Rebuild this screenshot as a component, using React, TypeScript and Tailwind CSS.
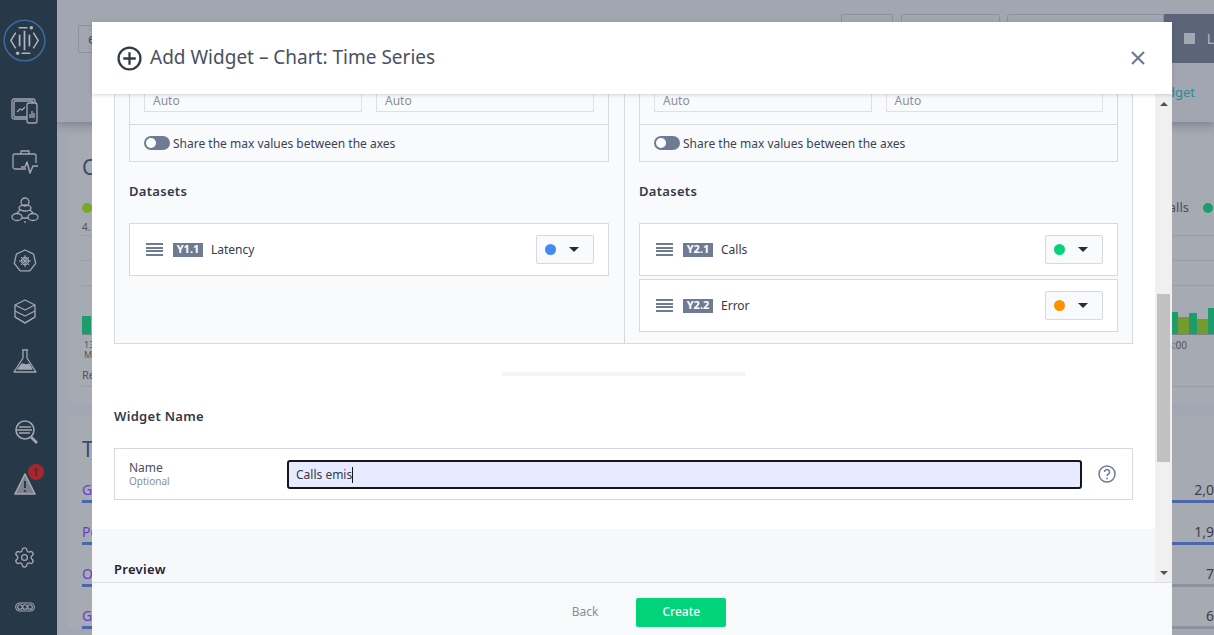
import { Settings } from "lucide-react";
import type { ReactNode } from "react";

function Logo() {
	return (
		<svg viewBox="0 0 44 44" className="h-[43px] w-[43px]" fill="none" stroke="#b0b4be" strokeWidth="1.5">
			<circle cx="22" cy="22" r="20.800" stroke="#3f6b9c" strokeWidth="1.500" />
			<path d="M13 14l-5 8 5 8M31 14l5 8-5 8M16 9h9M19 35h9" />
			<path d="M17 16v12M22 12v20M27 16v12" strokeWidth="1.800" />
			<circle cx="29" cy="9" r="1.800" fill="#b0b4be" stroke="none" />
			<circle cx="15" cy="35" r="1.800" fill="#b0b4be" stroke="none" />
		</svg>
	);
}

function NavIcon({ children }: { children: ReactNode }) {
	return (
		<svg viewBox="0 0 28 28" className="h-7 w-7" fill="none" stroke="#a3a7b1" strokeWidth="1.300" strokeLinejoin="round">
			{children}
		</svg>
	);
}

function NavCell({ children }: { children: ReactNode }) {
	return <div className="flex h-[50px] items-center justify-center">{children}</div>;
}

function Sidebar() {
	return (
		<aside className="flex h-[635px] w-[57px] shrink-0 flex-col items-center bg-[#273849] pr-2">
			<div className="mb-[25px] mt-[19px] h-[42px]">
				<Logo />
			</div>
			<NavCell>
				<NavIcon>
					<rect x="1" y="2" width="23" height="20" rx="2" />
					<rect x="3" y="4" width="19" height="16" rx="1" />
					<rect x="16" y="6" width="10" height="20" rx="2" fill="#273849" />
					<path d="M6 15l3-3 2 1 3-3M19 21v-4M21 21v-7M23 21v-5" />
				</NavIcon>
			</NavCell>
			<NavCell>
				<NavIcon>
					<g transform="translate(0 2)">
						<path d="M10 5V2h8v3" />
						<path d="M15 20H4a2 2 0 0 1-2-2V7a2 2 0 0 1 2-2h19a2 2 0 0 1 2 2v7" />
						<path d="M10 18h4l2-5 3 11 3-7h5" strokeWidth="1.500" />
					</g>
				</NavIcon>
			</NavCell>
			<NavCell>
				<NavIcon>
					<circle cx="14" cy="5" r="4" />
					<ellipse cx="14" cy="11" rx="6" ry="3" />
					<ellipse cx="6" cy="20" rx="5" ry="3.500" />
					<ellipse cx="22" cy="20" rx="5" ry="3.500" />
					<path d="M9 13l-3 3M19 13l3 3M11 21h6M14 24v2" />
				</NavIcon>
			</NavCell>
			<NavCell>
				<NavIcon>
					<path d="M14 3l8.600 4.100 2.100 9.300-5.900 7.500H9.200l-5.900-7.500 2.100-9.300z" />
					<circle cx="14" cy="14" r="3.500" />
					<path d="M14 8v12M8 14h12M10 10l8 8M18 10l-8 8" strokeWidth="1" />
				</NavIcon>
			</NavCell>
			<NavCell>
				<NavIcon>
					<path d="M14 3l10 5v12l-10 6-10-6V8z" />
					<path d="M4 8l10 5 10-5M4 14l10 5 10-5M4 20l10 6 10-6" />
				</NavIcon>
			</NavCell>
			<NavCell>
				<NavIcon>
					<path d="M11 3h6M12 3v8L3 25h22l-9-14V3" />
					<path d="M7 22l4-5 4 1 3-1 3 5z" fill="#a3a7b1" />
				</NavIcon>
			</NavCell>
			<div className="mt-[21px]">
				<NavCell>
					<NavIcon>
						<circle cx="14" cy="12" r="9" strokeWidth="1.600" />
						<path d="M20 19l6 6" strokeWidth="2.600" />
						<path d="M8 9h12M6 12h15M8 15h11" />
					</NavIcon>
				</NavCell>
			</div>
			<div className="mt-[2px]">
				<NavCell>
					<div className="relative">
						<NavIcon>
							<path d="M14 4L4 24h20z" fill="#7c818d" strokeWidth="1.600" />
							<path d="M14 11v7" stroke="#273849" strokeWidth="2" />
							<circle cx="14" cy="21" r="1.100" fill="#273849" stroke="none" />
						</NavIcon>
						<div className="absolute -top-[6px] left-[17px] flex h-4 w-4 items-center justify-center rounded-full bg-[#a6262d] text-[10px] font-semibold text-[#5e2227]">
							1
						</div>
					</div>
				</NavCell>
			</div>
			<div className="mt-[23px]">
				<NavCell>
					<Settings className="h-[23px] w-[23px] text-[#a3a7b1]" strokeWidth={1.4} />
				</NavCell>
			</div>
			<NavCell>
				<svg viewBox="0 0 20 10" className="h-[10px] w-5" fill="none" stroke="#a3a7b1" strokeWidth="1.100">
					<rect x="0.700" y="1" width="18.600" height="8" rx="4" />
					<circle cx="5" cy="5" r="2.300" fill="#273849" />
					<circle cx="10" cy="5" r="2.300" fill="#273849" />
					<circle cx="15" cy="5" r="2.300" fill="#273849" />
				</svg>
			</NavCell>
		</aside>
	);
}

const rows = [
	{ name: "G", value: "2,0", fill: 100 },
	{ name: "Po", value: "1,9", fill: 100 },
	{ name: "O", value: "7", fill: 30 },
	{ name: "G", value: "6", fill: 28 },
];

function Backdrop() {
	return (
		<div className="flex min-w-0 flex-1 flex-col bg-[#a3a7b1]">
			<div className="relative flex h-[122px] shrink-0 flex-col bg-[#a2a6b0] shadow-[0_3px_8px_rgba(60,60,70,0.35)]">
				<div className="flex items-start pl-[21px] pt-[14px]">
					<div className="mt-[11px] flex h-[28px] w-[300px] items-center rounded-[2px] border border-[#8d919b] px-[9px] text-sm text-[#4a4f5a]">
						e
					</div>
					<div className="ml-[464px] h-[34px] w-[52px] rounded-[2px] border border-[#8d919b]" />
					<div className="ml-2 h-[34px] w-[99px] rounded-[2px] border border-[#8d919b]" />
					<div className="ml-[7px] h-[34px] w-[157px] rounded-[2px] border border-[#8d919b]" />
					<div className="flex h-[49px] flex-1 items-center bg-[#5b6478] pl-5 text-sm text-[#b4b8c4]">
						<div className="h-[11px] w-[11px] bg-[#a3a7b1]" />
						<span className="ml-3">L</span>
					</div>
				</div>
				<div className="mt-[20px] flex justify-end pr-[19px] text-[13px] text-[#2b8c94]">dget</div>
			</div>
			<div className="flex flex-col gap-3 pl-[11px] pt-3">
				<div className="flex h-[269px] flex-col rounded bg-[#a6aab3] pl-[14px] pt-[21px]">
					<div className="h-6 text-[21px] leading-6 text-[#3c4a6b]">C</div>
					<div className="mt-[23px] flex h-3 items-center justify-between pr-px">
						<div className="h-[10px] w-[10px] rounded-full bg-[#7aa62a]" />
						<div className="flex items-center gap-[14px] text-[13px] text-[#4a4f5a]">
							alls
							<div className="h-[10px] w-[10px] rounded-full bg-[#1f9c6c]" />
						</div>
					</div>
					<div className="mt-[7px] h-3 text-[10px] leading-3 text-[#555]">4.</div>
					<div className="mt-[2px] h-px bg-[#999da7]" />
					<div className="mt-[24px] h-px bg-[#999da7]" />
					<div className="mt-[24px] h-px bg-[#999da7]" />
					<div className="flex h-[49px] items-end justify-between border-b border-[#7d818b]">
						<div className="h-[18px] w-[9px] bg-[#1f9c6c]" />
						<div className="flex items-end">
							<div className="h-[22px] w-[6px] bg-[#1f9c6c]" />
							<div className="h-[17px] w-[11px] bg-[#739c2d]" />
							<div className="h-[21px] w-[8px] bg-[#1f9c6c]" />
							<div className="h-[15px] w-[11px] bg-[#739c2d]" />
							<div className="h-[26px] w-[6px] bg-[#1f9c6c]" />
						</div>
					</div>
					<div className="flex justify-between pl-[2px] pr-[27px] pt-[5px] text-[9px] leading-[10px] text-[#555]">
						<div>
							<div>13</div>
							<div>M</div>
						</div>
						<div className="text-[10px]">8:00</div>
					</div>
					<div className="mt-[8px] h-[14px] text-[11px] leading-[14px] text-[#555]">Re</div>
					<div className="mt-[4px] h-px bg-[#999da7]" />
				</div>
				<div className="rounded bg-[#a6aab3] pl-[14px] pt-[22px]">
					<div className="h-6 text-[21px] leading-6 text-[#3c4a6b]">T</div>
					{rows.map((row, index) => (
						<div key={index} className="flex h-[42px] flex-col justify-end">
							<div className="flex items-end justify-between pb-[3px] text-sm leading-[14px] text-[#6b3fc4]">
								<span>{row.name}</span>
								<span className="text-[#3b3f4a]">{row.value}</span>
							</div>
							<div className="h-[3px] bg-[#8d919b]">
								<div className="h-[3px] bg-[#4a66ad]" style={{ width: `${row.fill}%` }} />
							</div>
						</div>
					))}
				</div>
			</div>
		</div>
	);
}

function Toggle() {
	return (
		<div className="flex h-[14px] w-[26px] items-center rounded-full bg-[#6f7a94] pl-[2px]">
			<div className="h-[10px] w-[10px] rounded-full bg-white" />
		</div>
	);
}

function AxisBox() {
	return (
		<div className="border-x border-b border-[#d5d9e0]">
			<div className="border-b border-[#d5d9e0] px-[14px] pb-[12px]">
				<div className="flex gap-[14px]">
					<div className="flex h-[18px] flex-1 items-end border-x border-b border-[#dde1e7] pb-[4px] pl-2 text-xs leading-3 text-[#8a8f99]">Auto</div>
					<div className="flex h-[18px] flex-1 items-end border-x border-b border-[#dde1e7] pb-[4px] pl-2 text-xs leading-3 text-[#8a8f99]">Auto</div>
				</div>
			</div>
			<div className="flex h-[36px] items-center gap-[3px] pl-[14px] text-xs text-[#3b4252]">
				<Toggle />
				<span className="pt-px">Share the max values between the axes</span>
			</div>
		</div>
	);
}

function DatasetRow({ tag, name, color }: { tag: string; name: string; color: string }) {
	return (
		<div className="flex h-[53px] items-center border border-[#d5d9e0] bg-white pl-4 pr-[14px]">
			<div className="flex w-[17px] flex-col gap-[1.500px]">
				<div className="h-[2px] bg-[#6f7a94]" />
				<div className="h-[2px] bg-[#6f7a94]" />
				<div className="h-[2px] bg-[#6f7a94]" />
				<div className="h-[2px] bg-[#6f7a94]" />
			</div>
			<div className="ml-[10px] flex h-[14px] w-[30px] items-center justify-center bg-[#6f7a94] text-[11px] font-bold text-white">{tag}</div>
			<div className="ml-2 text-xs text-[#343a48]">{name}</div>
			<div className="ml-auto flex h-[29px] w-[58px] items-center rounded-[2px] border border-[#d5d9e0] bg-[#f8fafc] pl-[8px]">
				<div className="h-[11px] w-[11px] rounded-full" style={{ backgroundColor: color }} />
				<div className="ml-[13px] h-0 w-0 border-x-[5px] border-t-[5px] border-x-transparent border-t-[#252b3a]" />
			</div>
		</div>
	);
}

function SectionTitle({ children }: { children: ReactNode }) {
	return <div className="h-[18px] text-[13px] font-semibold leading-[18px] tracking-[0.3px] text-[#343a48]">{children}</div>;
}

function Modal() {
	return (
		<div className="absolute left-[92px] top-[22px] flex h-[613px] w-[1080px] flex-col bg-white">
			<div className="relative z-10 flex h-[72px] shrink-0 items-center bg-white pl-[25px] pr-[27px] shadow-[0_1px_4px_rgba(40,50,70,0.2)]">
				<svg viewBox="0 0 24 24" className="h-[25px] w-[25px]" fill="none" stroke="#343a48" strokeWidth="2.200">
					<circle cx="12" cy="12" r="10.500" />
					<path d="M12 6v12M6 12h12" />
				</svg>
				<div className="ml-2 -mt-px text-[19px] text-[#4a5060]">Add Widget – Chart: Time Series</div>
				<svg viewBox="0 0 14 14" className="ml-auto h-[14px] w-[14px]" fill="none" stroke="#6f7a94" strokeWidth="2.200">
					<path d="M1 1l12 12M13 1L1 13" />
				</svg>
			</div>
			<div className="flex min-h-0 flex-1">
				<div className="min-w-0 flex-1 overflow-hidden">
					<div className="mx-[22px] flex border-x border-b border-[#d5d9e0] bg-[#f9fafc]">
						<div className="w-[510px] shrink-0 border-r border-[#d5d9e0] pl-[14px] pr-[15px]">
							<AxisBox />
							<div className="mt-5">
								<SectionTitle>Datasets</SectionTitle>
							</div>
							<div className="mt-[23px]">
								<DatasetRow tag="Y1.1" name="Latency" color="#4589f5" />
							</div>
						</div>
						<div className="min-w-0 flex-1 px-[14px]">
							<AxisBox />
							<div className="mt-5">
								<SectionTitle>Datasets</SectionTitle>
							</div>
							<div className="mt-[23px] flex flex-col gap-[3px] pb-[11px]">
								<DatasetRow tag="Y2.1" name="Calls" color="#00d37a" />
								<DatasetRow tag="Y2.2" name="Error" color="#ff9000" />
							</div>
						</div>
					</div>
					<div className="mx-auto mt-7 h-1 w-[243px] bg-[#f2f4f6]" />
					<div className="px-[22px] pt-[31px]">
						<SectionTitle>Widget Name</SectionTitle>
						<div className="mt-[23px] flex h-[52px] items-center border border-[#d5d9e0] pl-[14px]">
							<div className="w-[158px] pt-px text-xs leading-3 text-[#4a5060]">
								<div>Name</div>
								<div className="mt-px text-[10px] text-[#8a8f99]">Optional</div>
							</div>
							<div className="flex h-[29px] w-[795px] items-center rounded-[3px] border-2 border-[#14161c] bg-[#e8ebff] pl-[7px] pt-px text-xs text-[#343a48]">
								Calls emis
								<div className="h-[16px] w-px bg-[#14161c]" />
							</div>
							<svg viewBox="0 0 18 18" className="ml-4 h-[18px] w-[18px]" fill="none" stroke="#6f7a94" strokeWidth="1.500">
								<circle cx="9" cy="9" r="8" />
								<path d="M6.500 7a2.500 2.500 0 1 1 3.800 2.100c-.9.600-1.300 1-1.300 2" />
								<circle cx="9" cy="13.500" r="0.900" fill="#6f7a94" stroke="none" />
							</svg>
						</div>
					</div>
					<div className="mt-[29px] h-[53px] bg-[#f7f8fa] px-[22px] pt-[31px]">
						<div className="h-[18px] text-[13px] font-semibold leading-[18px] tracking-[0.3px] text-[#1f2533]">Preview</div>
					</div>
				</div>
				<div className="flex w-[17px] shrink-0 flex-col items-center bg-[#f0f0f0]">
					<div className="mt-2 h-0 w-0 border-x-4 border-b-4 border-x-transparent border-b-[#505050]" />
					<div className="mt-[188px] h-[168px] w-[13px] bg-[#c1c1c1]" />
					<div className="mt-[109px] h-0 w-0 border-x-4 border-t-4 border-x-transparent border-t-[#505050]" />
				</div>
			</div>
			<div className="flex h-[53px] shrink-0 items-center justify-center border-t border-[#dde1e7] bg-[#f8f9fb] pl-[34px] pt-[6px]">
				<div className="text-xs text-[#8a8f99]">Back</div>
				<div className="ml-[38px] flex h-[29px] w-[90px] items-center justify-center rounded-[2px] bg-[#00d37a] text-xs font-medium text-white">Create</div>
			</div>
		</div>
	);
}

export default function App() {
	return (
		<div className="relative flex h-[635px] w-[1214px] overflow-hidden font-['Noto_Sans',sans-serif]">
			<Sidebar />
			<Backdrop />
			<Modal />
		</div>
	);
}
